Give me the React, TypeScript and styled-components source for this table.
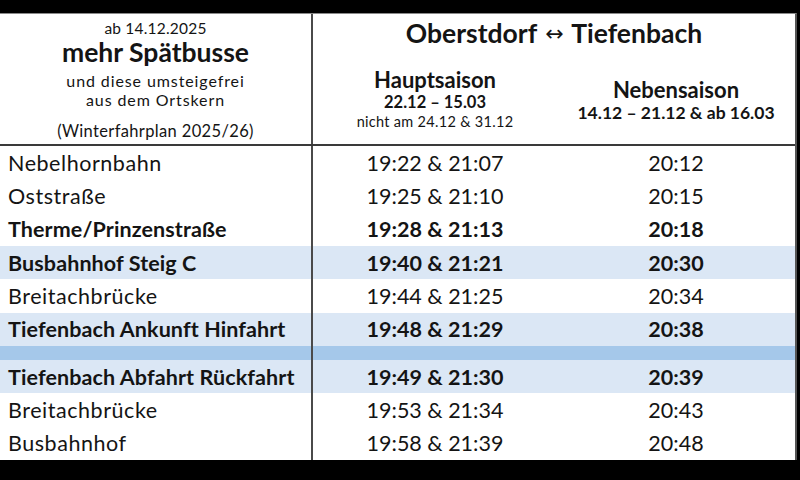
import React from "react";
import styled, { createGlobalStyle } from "styled-components";

const Global = createGlobalStyle`
  html, body { margin: 0; padding: 0; background: #000; }
  body { font-family: "Lato", "Liberation Sans", sans-serif; color: #141414; }
`;

const Frame = styled.div`
  width: 800px;
  height: 480px;
  padding-top: 13px;
  box-sizing: border-box;
  background: #000;
`;

const Sheet = styled.div`
  width: 797px;
  height: 447px;
  background: #fff;
  display: flex;
  flex-direction: column;
  border-top: 1px solid #8a8a8a;
  box-sizing: border-box;
  border-right: 2px solid #555;
`;

const COLS = "311px 2px 244px 1fr";

const Header = styled.div`
  display: grid;
  grid-template-columns: ${COLS};
  grid-template-rows: 43px 1fr;
  height: 130px;
  border-bottom: 2px solid #3a3a3a;
  flex: none;
`;

const Intro = styled.div`
  grid-row: 1 / span 2;
  grid-column: 1;
  display: flex;
  flex-direction: column;
  align-items: center;
  padding-top: 4px;
  text-align: center;
`;

const Divider = styled.div`
  background: #4a4a4a;
`;

const HeaderDivider = styled(Divider)`
  grid-row: 1 / span 2;
  grid-column: 2;
`;

const DateLine = styled.div`
  font-size: 15.5px;
  line-height: 20px;
  letter-spacing: 0.2px;
`;

const Headline = styled.div`
  font-size: 26.5px;
  font-weight: 700;
  line-height: 28px;
  margin-top: 0px;
`;

const SubLine = styled.div`
  font-size: 16px;
  line-height: 19px;
  letter-spacing: 0.9px;
`;

const FirstSubLine = styled(SubLine)`
  margin-top: 5px;
`;

const NoteLine = styled.div`
  font-size: 16.5px;
  line-height: 20px;
  margin-top: 12px;
  letter-spacing: 0.35px;
`;

const Title = styled.div`
  grid-column: 3 / span 2;
  grid-row: 1;
  font-size: 26.5px;
  font-weight: 700;
  text-align: center;
  line-height: 32px;
  padding-top: 3px;
  white-space: nowrap;
`;

const ArrowGlyph = styled.span`
  font-family: "DejaVu Sans", sans-serif;
  font-weight: 400;
  font-size: 22px;
  display: inline-block;
  margin: 0 2px;
  position: relative;
  top: -2px;
`;

const Season = styled.div<{ $col: number; $top: number }>`
  grid-column: ${(p) => p.$col};
  grid-row: 2;
  display: flex;
  flex-direction: column;
  align-items: center;
  padding-top: ${(p) => p.$top}px;
  text-align: center;
`;

const SeasonName = styled.div`
  font-size: 22px;
  font-weight: 700;
  line-height: 24px;
`;

const SeasonRange = styled.div`
  font-size: 16.5px;
  font-weight: 700;
  line-height: 21px;
`;

const WideRange = styled(SeasonRange)`
  font-size: 17.5px;
`;

const SeasonNote = styled.div`
  font-size: 14.5px;
  line-height: 17px;
  letter-spacing: 0.3px;
`;

const Body = styled.div`
  flex: 1;
  display: flex;
  flex-direction: column;
`;

const Row = styled.div<{ $hl?: boolean }>`
  flex: 1;
  display: grid;
  grid-template-columns: ${COLS};
  align-items: center;
  background: ${(p) => (p.$hl ? "#dbe7f5" : "#fff")};
  font-size: 21.5px;
  font-weight: ${(p) => (p.$hl ? 700 : 400)};
`;

const BoldRow = styled(Row)`
  font-weight: 700;
`;

const Spacer = styled.div`
  flex: none;
  height: 14px;
  display: grid;
  grid-template-columns: ${COLS};
  background: #a5c8ea;
`;

const RowDivider = styled(Divider)`
  align-self: stretch;
`;

const Stop = styled.div<{ $plain?: boolean }>`
  padding-left: 8px;
  white-space: nowrap;
  letter-spacing: ${(p) => (p.$plain ? "0.55px" : "0.1px")};
`;

const Time = styled.div`
  text-align: center;
  white-space: nowrap;
`;

type Entry = { stop: string; a: string; b: string; kind: "plain" | "bold" | "hl" };

const outbound: Entry[] = [
  { stop: "Nebelhornbahn", a: "19:22 & 21:07", b: "20:12", kind: "plain" },
  { stop: "Oststraße", a: "19:25 & 21:10", b: "20:15", kind: "plain" },
  { stop: "Therme/Prinzenstraße", a: "19:28 & 21:13", b: "20:18", kind: "bold" },
  { stop: "Busbahnhof Steig C", a: "19:40 & 21:21", b: "20:30", kind: "hl" },
  { stop: "Breitachbrücke", a: "19:44 & 21:25", b: "20:34", kind: "plain" },
  { stop: "Tiefenbach Ankunft Hinfahrt", a: "19:48 & 21:29", b: "20:38", kind: "hl" },
];

const inbound: Entry[] = [
  { stop: "Tiefenbach Abfahrt Rückfahrt", a: "19:49 & 21:30", b: "20:39", kind: "hl" },
  { stop: "Breitachbrücke", a: "19:53 & 21:34", b: "20:43", kind: "plain" },
  { stop: "Busbahnhof", a: "19:58 & 21:39", b: "20:48", kind: "plain" },
];

const renderRow = (e: Entry, i: number) => {
  const R = e.kind === "bold" ? BoldRow : Row;
  return (
    <R key={i} $hl={e.kind === "hl"}>
      <Stop $plain={e.kind === "plain"}>{e.stop}</Stop>
      <RowDivider />
      <Time>{e.a}</Time>
      <Time>{e.b}</Time>
    </R>
  );
};

export default function App() {
  return (
    <>
      <Global />
      <Frame>
        <Sheet>
          <Header>
            <Intro>
              <DateLine>ab 14.12.2025</DateLine>
              <Headline>mehr Spätbusse</Headline>
              <FirstSubLine>und diese umsteigefrei</FirstSubLine>
              <SubLine>aus dem Ortskern</SubLine>
              <NoteLine>(Winterfahrplan 2025/26)</NoteLine>
            </Intro>
            <HeaderDivider />
            <Title>
              Oberstdorf <ArrowGlyph>↔</ArrowGlyph> Tiefenbach
            </Title>
            <Season $col={3} $top={11}>
              <SeasonName>Hauptsaison</SeasonName>
              <SeasonRange>22.12 – 15.03</SeasonRange>
              <SeasonNote>nicht am 24.12 &amp; 31.12</SeasonNote>
            </Season>
            <Season $col={4} $top={21}>
              <SeasonName>Nebensaison</SeasonName>
              <WideRange>14.12 – 21.12 &amp; ab 16.03</WideRange>
            </Season>
          </Header>
          <Body>
            {outbound.map(renderRow)}
            <Spacer>
              <div />
              <RowDivider />
            </Spacer>
            {inbound.map(renderRow)}
          </Body>
        </Sheet>
      </Frame>
    </>
  );
}
